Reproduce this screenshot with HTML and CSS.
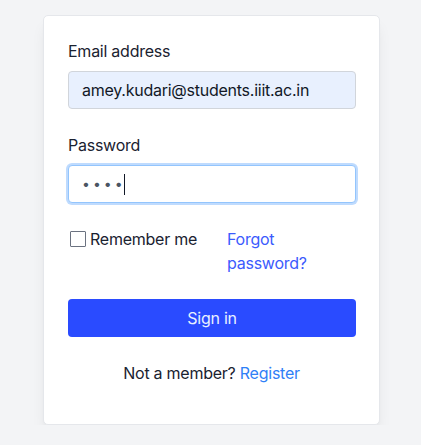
FILE: index.html
```html
<!DOCTYPE html>
<html lang="en">
<head>
<meta charset="utf-8">
<title>Sign in</title>
<link rel="stylesheet" href="styles.css">
</head>
<body>
<div class="card">
  <form class="form">
    <div class="field">
      <label class="label" for="email">Email address</label>
      <input class="input input-autofill" id="email" type="email" value="amey.kudari@students.iiit.ac.in">
    </div>
    <div class="field">
      <label class="label" for="password">Password</label>
      <div class="input input-focus" id="password"><span class="dots">••••</span><span class="caret"></span></div>
    </div>
    <div class="options">
      <label class="remember"><span class="checkbox"></span><span>Remember me</span></label>
      <a class="link forgot" href="#">Forgot password?</a>
    </div>
    <button class="btn" type="button">Sign in</button>
    <p class="footer">Not a member? <a class="link register" href="#">Register</a></p>
  </form>
</div>
</body>
</html>
```

FILE: styles.css
```css
* { box-sizing: border-box; }
html, body { margin: 0; padding: 0; }
body {
  background: #f3f4f6;
  font-family: Inter, "Noto Sans", sans-serif;
  color: #1a2230;
  font-size: 16px;
  line-height: 24px;
  letter-spacing: -0.25px;
}
.card {
  margin: 15px 0 0 43px;
  width: 337px;
  height: 410px;
  background: #fff;
  border: 1px solid #e5e7eb;
  border-radius: 5px;
  box-shadow: 0 10px 15px -3px rgba(0,0,0,0.08), 0 4px 6px -4px rgba(0,0,0,0.08);
  padding: 23px 24px 0 24px;
}
.form { display: flex; flex-direction: column; }
.field { display: flex; flex-direction: column; gap: 8px; margin-bottom: 24px; }
.label { font-size: 16px; line-height: 24px; color: #1a2230; }
.input {
  width: 288px;
  height: 38px;
  border: 1px solid #d1d5db;
  border-radius: 4px;
  padding: 0 13px;
  font: inherit;
  letter-spacing: -0.25px;
  color: #111827;
  outline: none;
}
.input-autofill { background: #e8f0fe; }
.input-focus {
  display: flex;
  align-items: center;
  background: #fff;
  border-color: #93c5fd;
  box-shadow: 0 0 0 2px #bfdbfe;
  padding-left: 13px;
}
.dots { letter-spacing: 3px; font-size: 14px; color: #4b5563; }
.caret { width: 1px; height: 21px; background: #111827; margin-left: -2px; }
.options {
  display: grid;
  grid-template-columns: 159px 100px;
  margin-bottom: 24px;
}
.remember { display: flex; align-items: flex-start; gap: 4px; padding-left: 2px; }
.checkbox {
  width: 16px; height: 16px; margin-top: 4px;
  border: 1px solid #6b7280; border-radius: 1px; background: #fff;
}
.link { color: #3b5bfd; text-decoration: none; }
.btn {
  width: 288px;
  height: 38px;
  border: 0;
  border-radius: 4px;
  background: #2a4bff;
  color: #e8f1ff;
  font: inherit;
  letter-spacing: -0.25px;
  cursor: pointer;
}
.footer { margin: 24px 0 0; text-align: center; }
.register { color: #2f80f7; }
```
